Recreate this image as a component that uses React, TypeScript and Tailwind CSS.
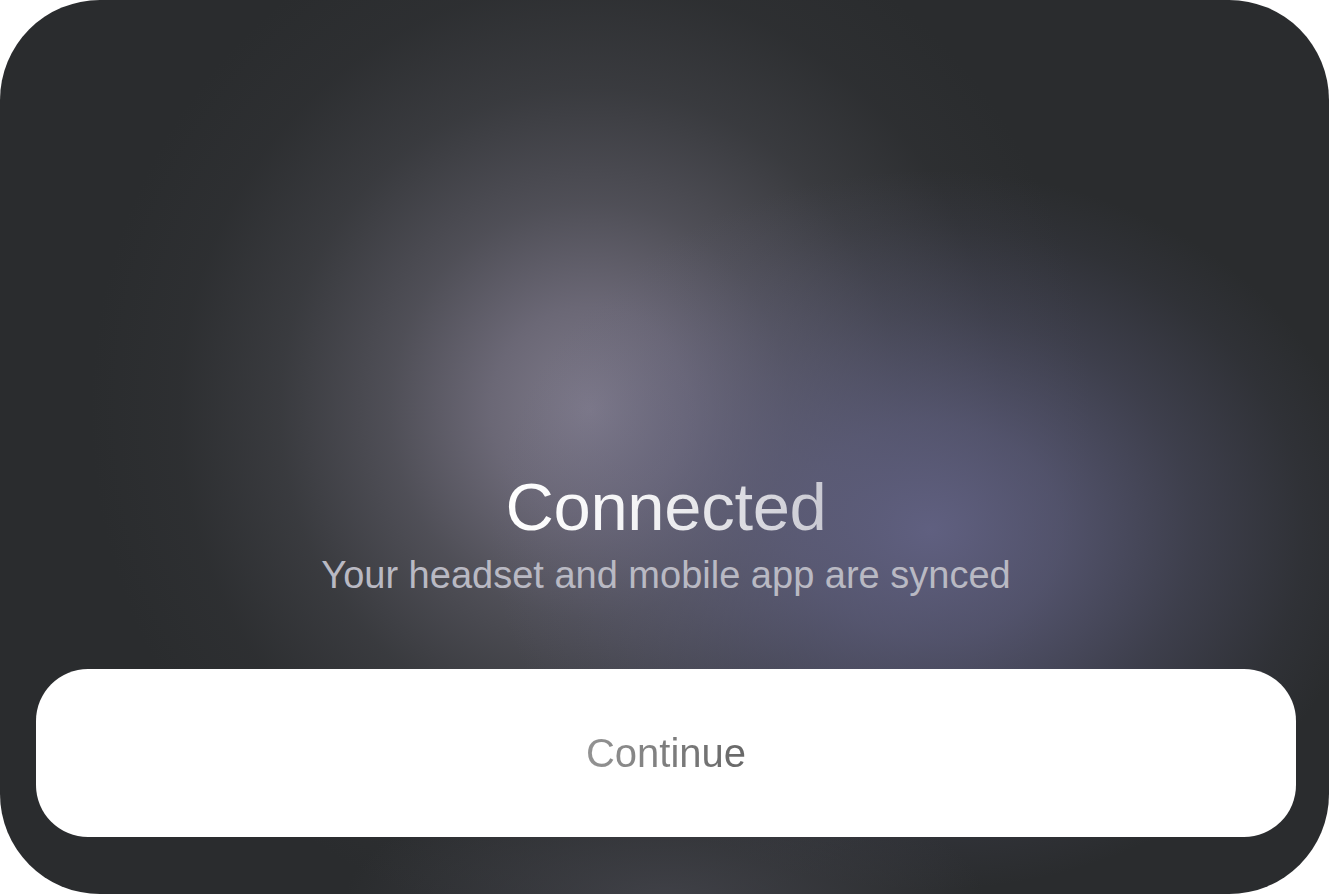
export default function App() {
  return (
    <div className="w-[1329px] h-[894px] bg-white">
      <div
        className="w-full h-full rounded-[100px] overflow-hidden flex flex-col items-center justify-end pl-[36px] pr-[33px] pb-[57px] bg-[#2a2c2e] bg-[radial-gradient(ellipse_320px_120px_at_665px_900px,rgba(66,67,74,0.9),rgba(66,67,74,0)),radial-gradient(ellipse_440px_360px_at_930px_530px,rgba(98,98,132,0.95),rgba(98,98,132,0.7)_30%,rgba(98,98,132,0.35)_60%,rgba(98,98,132,0.1)_85%,rgba(98,98,132,0)_100%),radial-gradient(ellipse_500px_520px_at_590px_410px,rgba(126,122,138,1),rgba(118,114,130,0.85)_20%,rgba(104,102,114,0.6)_40%,rgba(86,86,94,0.35)_62%,rgba(70,70,76,0.12)_82%,rgba(60,60,64,0)_100%)]"
        style={{ fontFamily: '"Liberation Sans", Arial, sans-serif' }}
      >
        {/* headline */}
        <div className="flex flex-col items-center mb-[75px]">
          <h1 className="text-[67px] leading-[65px] tracking-[-0.005em] bg-[linear-gradient(90deg,#ffffff_0%,#f2f2f4_45%,#c9c9d2_100%)] bg-clip-text text-transparent">
            Connected
          </h1>
          <p className="mt-[17px] text-[38px] leading-[38px] text-[#b9b9c3]">
            Your headset and mobile app are synced
          </p>
        </div>

        {/* action */}
        <button className="w-full h-[168px] rounded-[52px] bg-white flex items-center justify-center">
          <span className="text-[40px] leading-[40px] bg-[linear-gradient(90deg,#939393_0%,#7c7c7c_55%,#676767_100%)] bg-clip-text text-transparent">
            Continue
          </span>
        </button>
      </div>
    </div>
  );
}
